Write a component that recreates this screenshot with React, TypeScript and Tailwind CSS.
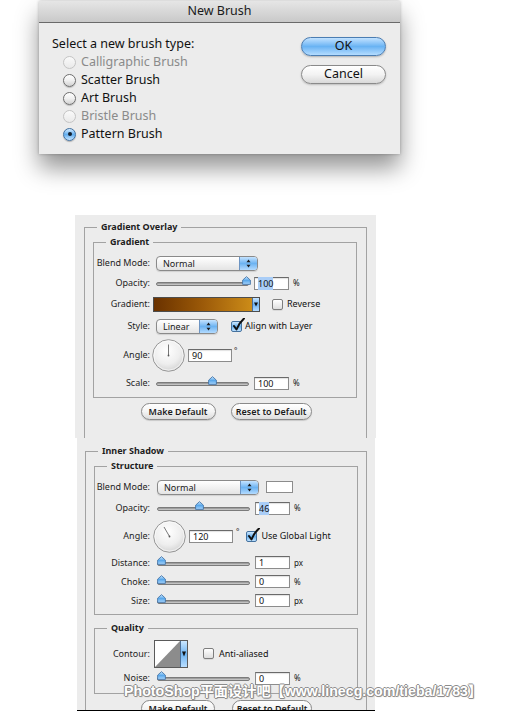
import React from "react";

type RadioState = "off" | "disabled" | "on";

function Radio({ state }: { state: RadioState }) {
  if (state === "on") {
    return (
      <span className="flex h-[13px] w-[13px] shrink-0 items-center justify-center rounded-full border border-[#41709f] bg-gradient-to-b from-[#d3ebff] via-[#62aeee] to-[#c4e4ff] shadow-[0_1px_1px_rgba(0,0,0,0.25)]">
        <span className="h-[4px] w-[4px] rounded-full bg-[#14202e]" />
      </span>
    );
  }
  if (state === "disabled") {
    return <span className="block h-[13px] w-[13px] shrink-0 rounded-full border border-[#c4c4c4] bg-gradient-to-b from-[#fafafa] to-[#e9e9e9]" />;
  }
  return <span className="block h-[13px] w-[13px] shrink-0 rounded-full border border-[#6e6e6e] bg-gradient-to-b from-white via-[#f0f0f0] to-[#d2d2d2] shadow-[0_1px_1px_rgba(0,0,0,0.2)]" />;
}

function Stepper() {
  return (
    <svg width="5" height="9" viewBox="0 0 5 9">
      <path d="M2.5 0.5 L4.5 3.3 L0.5 3.3 Z" fill="#1b1b1b" />
      <path d="M2.5 8.5 L4.5 5.7 L0.5 5.7 Z" fill="#1b1b1b" />
    </svg>
  );
}

function Popup({ value, w }: { value: string; w: string }) {
  return (
    <div className={`flex h-[15px] ${w} overflow-hidden rounded-[4px] border border-[#8a8a8a] bg-gradient-to-b from-white to-[#e4e4e4] shadow-[0_1px_1px_rgba(0,0,0,0.12)]`}>
      <span className="flex-1 pl-[6px] text-[9px] leading-[13px] text-[#1a1a1a]">{value}</span>
      <span className="flex w-[18px] items-center justify-center border-l border-[#6d94c2] bg-gradient-to-b from-[#c4e3ff] via-[#6cb3f1] to-[#b3dbff]">
        <Stepper />
      </span>
    </div>
  );
}

function Thumb() {
  return (
    <svg width="9" height="9" viewBox="0 0 9 9">
      <defs>
        <linearGradient id="tg" x1="0" y1="0" x2="0" y2="1">
          <stop offset="0" stopColor="#c9e7ff" />
          <stop offset="0.5" stopColor="#5ba8ea" />
          <stop offset="1" stopColor="#a8d6ff" />
        </linearGradient>
      </defs>
      <path d="M0.6 4.2 L4.5 0.6 L8.4 4.2 L8.4 8.4 L0.6 8.4 Z" fill="url(#tg)" stroke="#3c6c9f" strokeWidth="0.8" strokeLinejoin="round" />
    </svg>
  );
}

function Slider({ at }: { at: string }) {
  return (
    <div className="relative flex h-[12px] w-[96px] items-center">
      <div className="mt-[2px] h-[4px] w-[93px] rounded-full border border-[#7b7b7b] bg-gradient-to-b from-[#8e8e8e] to-[#d4d4d4]" />
      <div className={`absolute top-[-1px] ${at}`}>
        <Thumb />
      </div>
    </div>
  );
}

function Field({ value, sel, w = "w-[35px]" }: { value: string; sel?: boolean; w?: string }) {
  return (
    <div className={`h-[13px] ${w} border border-[#8c8c8c] border-t-[#6a6a6a] bg-white pl-[3px] text-[9px] leading-[11px] text-[#111] shadow-[inset_0_1px_1px_rgba(0,0,0,0.12)]`}>
      <span className={sel ? "bg-[#a9cdf7]" : ""}>{value}</span>
    </div>
  );
}

function Check({ on }: { on?: boolean }) {
  if (!on) {
    return <div className="h-[11px] w-[11px] shrink-0 rounded-[2px] border border-[#7d7d7d] bg-gradient-to-b from-white to-[#dedede] shadow-[0_1px_0_rgba(0,0,0,0.08)]" />;
  }
  return (
    <div className="relative h-[11px] w-[11px] shrink-0 rounded-[2px] border border-[#45729f] bg-gradient-to-b from-[#cfe9ff] via-[#68b1ef] to-[#bde1ff]">
      <svg className="absolute left-[0px] top-[-4px]" width="13" height="14" viewBox="0 0 13 14">
        <path d="M2 8 L4.5 11.5 Q7 5 12 0.5" fill="none" stroke="#111" strokeWidth="2" strokeLinecap="round" strokeLinejoin="round" />
      </svg>
    </div>
  );
}

function Dial({ angle }: { angle: number }) {
  const r = (angle * Math.PI) / 180;
  const x2 = 16.5 + Math.cos(r) * 11;
  const y2 = 16.5 - Math.sin(r) * 11;
  return (
    <svg width="33" height="33" viewBox="0 0 33 33" className="shrink-0">
      <defs>
        <radialGradient id={`dg${angle}`} cx="0.45" cy="0.35" r="0.7">
          <stop offset="0" stopColor="#ffffff" />
          <stop offset="0.6" stopColor="#eeeeee" />
          <stop offset="1" stopColor="#cfcfcf" />
        </radialGradient>
      </defs>
      <circle cx="16.5" cy="16.5" r="15.8" fill={`url(#dg${angle})`} stroke="#8e8e8e" strokeWidth="0.9" />
      <circle cx="16.5" cy="16.5" r="14.6" fill="none" stroke="#ffffff" strokeWidth="0.6" />
      <line x1="16.5" y1="16.5" x2={x2} y2={y2} stroke="#555" strokeWidth="0.8" />
      <circle cx="16.5" cy="16.5" r="0.9" fill="#555" />
    </svg>
  );
}

function Row({ label, h, lw, children }: { label: string; h: string; lw: string; children?: React.ReactNode }) {
  return (
    <div className={`flex items-center ${h}`}>
      <div className={`${lw} shrink-0 text-right text-[9px] leading-[12px] text-[#1e1e1e]`}>{label}</div>
      <div className="flex items-center">{children}</div>
    </div>
  );
}

function PillButton({ children, w }: { children: React.ReactNode; w: string }) {
  return (
    <div className={`flex h-[17px] ${w} items-center justify-center rounded-full border border-[#8a8a8a] bg-gradient-to-b from-white via-[#f4f4f4] to-[#dcdcdc] text-[9px] font-semibold text-[#1c1c1c] shadow-[0_1px_1px_rgba(0,0,0,0.15)]`}>
      {children}
    </div>
  );
}

function Legend({ children }: { children: React.ReactNode }) {
  return <legend className="ml-3 px-1 text-[9px] font-bold leading-[12px] text-[#1d1d1d]">{children}</legend>;
}

function GradientBar() {
  return (
    <div className="-ml-[3px] flex h-[15px] w-[107px] border border-[#4d4d4d]">
      <div className="flex-1 bg-gradient-to-r from-[#6a3200] via-[#9c5a09] to-[#cc8c18]" />
      <div className="flex w-[7px] items-center justify-center border-l border-[#4d6f96] bg-gradient-to-b from-[#c6e4ff] via-[#6cb2ef] to-[#b5dcff]">
        <svg width="4" height="5" viewBox="0 0 4 5">
          <path d="M0 0.5 L4 0.5 L2 4.5 Z" fill="#111" />
        </svg>
      </div>
    </div>
  );
}

function Contour() {
  return (
    <div className="-ml-[3px] flex h-[28px] w-[34px] border border-[#5a5a5a]">
      <svg width="25" height="26" viewBox="0 0 25 26" className="bg-white">
        <path d="M0 26 L25 0 L25 26 Z" fill="#8c8c8c" />
      </svg>
      <div className="flex flex-1 items-center justify-center border-l border-[#4d6f96] bg-gradient-to-b from-[#cbe7ff] via-[#6db3f0] to-[#b9deff]">
        <svg width="4" height="6" viewBox="0 0 4 6">
          <path d="M0 0.5 L4 0.5 L2 5.5 Z" fill="#111" />
        </svg>
      </div>
    </div>
  );
}

export default function App() {
  const lw1 = "w-[56px] mr-[6px]";
  const lw2 = "w-[55px] mr-[7px]";
  return (
    <div className="relative flex h-[711px] w-[532px] flex-col overflow-hidden bg-white font-['Noto_Sans',sans-serif] text-[#111]">
      {/* New Brush dialog */}
      <div className="ml-[39px] mt-[1px] flex h-[153px] w-[361px] flex-col bg-[#ececec] shadow-[0_14px_22px_rgba(0,0,0,0.42),0_0_3px_rgba(0,0,0,0.25)]">
        <div className="flex h-[22px] items-center justify-center border-b border-[#6a6a6a] bg-gradient-to-b from-[#e6e6e6] to-[#c9c9c9] text-[12.5px] leading-none text-[#1a1a1a]">
          New Brush
        </div>
        <div className="flex flex-1 justify-between pl-[13px] pr-[14px] pt-[12px]">
          <div className="flex flex-col text-[12.5px]">
            <div className="flex h-[18px] items-center">Select a new brush type:</div>
            {([
              ["Calligraphic Brush", "disabled"],
              ["Scatter Brush", "off"],
              ["Art Brush", "off"],
              ["Bristle Brush", "disabled"],
              ["Pattern Brush", "on"],
            ] as [string, RadioState][]).map(([t, s]) => (
              <div key={t} className="flex h-[18px] items-center gap-[5px] pl-[11px]">
                <Radio state={s} />
                <span className={s === "disabled" ? "text-[#8a8a8a]" : "text-[#111]"}>{t}</span>
              </div>
            ))}
          </div>
          <div className="flex flex-col gap-[9px] pt-[2px]">
            <div className="flex h-[19px] w-[85px] items-center justify-center rounded-full border border-[#4b7db2] bg-gradient-to-b from-[#c2e2ff] via-[#69b3f3] to-[#b4dcff] text-[12.5px] text-[#111] shadow-[0_1px_2px_rgba(0,0,0,0.25)]">
              OK
            </div>
            <div className="flex h-[19px] w-[85px] items-center justify-center rounded-full border border-[#8a8a8a] bg-gradient-to-b from-white via-[#f3f3f3] to-[#d9d9d9] text-[12.5px] text-[#111] shadow-[0_1px_2px_rgba(0,0,0,0.2)]">
              Cancel
            </div>
          </div>
        </div>
      </div>

      {/* Gradient Overlay panel */}
      <div className="ml-[75px] mt-[61px] h-[223px] w-[301px] shrink-0 overflow-hidden bg-[#ececec] pl-[9px] pr-[9px] pt-[6px]">
        <fieldset className="border border-[#a2a2a2] pb-[40px]">
          <Legend>Gradient Overlay</Legend>
          <fieldset className="ml-[8px] mr-[9px] mt-[3px] border border-[#a2a2a2] pb-[4px] pt-[5px]">
            <Legend>Gradient</Legend>
            <Row label="Blend Mode:" h="h-[20px]" lw={lw1}>
              <Popup value="Normal" w="w-[102px]" />
            </Row>
            <Row label="Opacity:" h="h-[20px]" lw={lw1}>
              <Slider at="left-[86px]" />
              <div className="ml-[2px]">
                <Field value="100" sel />
              </div>
              <span className="ml-[4px] text-[8px]">%</span>
            </Row>
            <Row label="Gradient:" h="h-[22px]" lw={lw1}>
              <GradientBar />
              <div className="ml-[12px]">
                <Check />
              </div>
              <span className="ml-[4px] text-[9px]">Reverse</span>
            </Row>
            <Row label="Style:" h="h-[22px]" lw={lw1}>
              <Popup value="Linear" w="w-[62px]" />
              <div className="ml-[13px]">
                <Check on />
              </div>
              <span className="ml-[3px] text-[9px]">Align with Layer</span>
            </Row>
            <Row label="Angle:" h="h-[36px]" lw={lw1}>
              <div className="-ml-[4px]">
                <Dial angle={90} />
              </div>
              <div className="ml-[3px]">
                <Field value="90" w="w-[44px]" />
              </div>
              <span className="mb-[8px] ml-[2px] text-[8px]">°</span>
            </Row>
            <Row label="Scale:" h="h-[20px]" lw={lw1}>
              <Slider at="left-[52px]" />
              <div className="ml-[2px]">
                <Field value="100" />
              </div>
              <span className="ml-[4px] text-[8px]">%</span>
            </Row>
          </fieldset>
          <div className="mt-[5px] flex justify-center gap-[15px] pl-[1px]">
            <PillButton w="w-[75px]">Make Default</PillButton>
            <PillButton w="w-[81px]">Reset to Default</PillButton>
          </div>
        </fieldset>
      </div>

      {/* Inner Shadow panel */}
      <div className="ml-[77px] h-[273px] w-[298px] shrink-0 overflow-hidden border-b border-black bg-[#ececec] pl-[8px] pr-[8px] pt-[7px]">
        <fieldset className="border border-[#a2a2a2] pb-[40px]">
          <Legend>Inner Shadow</Legend>
          <fieldset className="ml-[8px] mr-[8px] mt-[3px] border border-[#a2a2a2] pb-[4px] pt-[5px]">
            <Legend>Structure</Legend>
            <Row label="Blend Mode:" h="h-[20px]" lw={lw2}>
              <Popup value="Normal" w="w-[102px]" />
              <div className="ml-[7px] h-[12px] w-[27px] border border-[#8c8c8c] bg-white" />
            </Row>
            <Row label="Opacity:" h="h-[22px]" lw={lw2}>
              <Slider at="left-[38px]" />
              <div className="ml-[2px]">
                <Field value="46" sel />
              </div>
              <span className="ml-[4px] text-[8px]">%</span>
            </Row>
            <Row label="Angle:" h="h-[34px]" lw={lw2}>
              <div className="-ml-[4px]">
                <Dial angle={120} />
              </div>
              <div className="ml-[3px]">
                <Field value="120" w="w-[44px]" />
              </div>
              <span className="mb-[8px] ml-[3px] text-[8px]">°</span>
              <div className="ml-[7px]">
                <Check on />
              </div>
              <span className="ml-[4px] text-[9px]">Use Global Light</span>
            </Row>
            <Row label="Distance:" h="h-[19px]" lw={lw2}>
              <Slider at="left-[0px]" />
              <div className="ml-[2px]">
                <Field value="1" />
              </div>
              <span className="ml-[4px] text-[8px]">px</span>
            </Row>
            <Row label="Choke:" h="h-[19px]" lw={lw2}>
              <Slider at="left-[0px]" />
              <div className="ml-[2px]">
                <Field value="0" />
              </div>
              <span className="ml-[4px] text-[8px]">%</span>
            </Row>
            <Row label="Size:" h="h-[19px]" lw={lw2}>
              <Slider at="left-[0px]" />
              <div className="ml-[2px]">
                <Field value="0" />
              </div>
              <span className="ml-[4px] text-[8px]">px</span>
            </Row>
          </fieldset>
          <fieldset className="ml-[8px] mr-[8px] mt-[7px] border border-[#a2a2a2] pb-[5px] pt-[5px]">
            <Legend>Quality</Legend>
            <Row label="Contour:" h="h-[29px]" lw={lw2}>
              <Contour />
              <div className="ml-[15px]">
                <Check />
              </div>
              <span className="ml-[5px] text-[9px]">Anti-aliased</span>
            </Row>
            <Row label="Noise:" h="h-[20px]" lw={lw2}>
              <Slider at="left-[0px]" />
              <div className="ml-[2px]">
                <Field value="0" />
              </div>
              <span className="ml-[4px] text-[8px]">%</span>
            </Row>
          </fieldset>
          <div className="mt-[6px] flex justify-center gap-[17px] pl-[1px]">
            <PillButton w="w-[74px]">Make Default</PillButton>
            <PillButton w="w-[80px]">Reset to Default</PillButton>
          </div>
        </fieldset>
      </div>

      {/* watermark */}
      <div className="absolute left-[124px] top-[682px] whitespace-nowrap font-['Liberation_Sans','Noto_Sans_CJK_SC',sans-serif] text-[14.2px] font-bold leading-[18px] text-white [text-shadow:1px_0_0_#8c8c8c,-1px_0_0_#8c8c8c,0_1px_0_#8c8c8c,0_-1px_0_#8c8c8c,1px_1px_1px_#9a9a9a]">
        PhotoShop平面设计吧【www.linecg.com/tieba/1783】
      </div>
    </div>
  );
}
